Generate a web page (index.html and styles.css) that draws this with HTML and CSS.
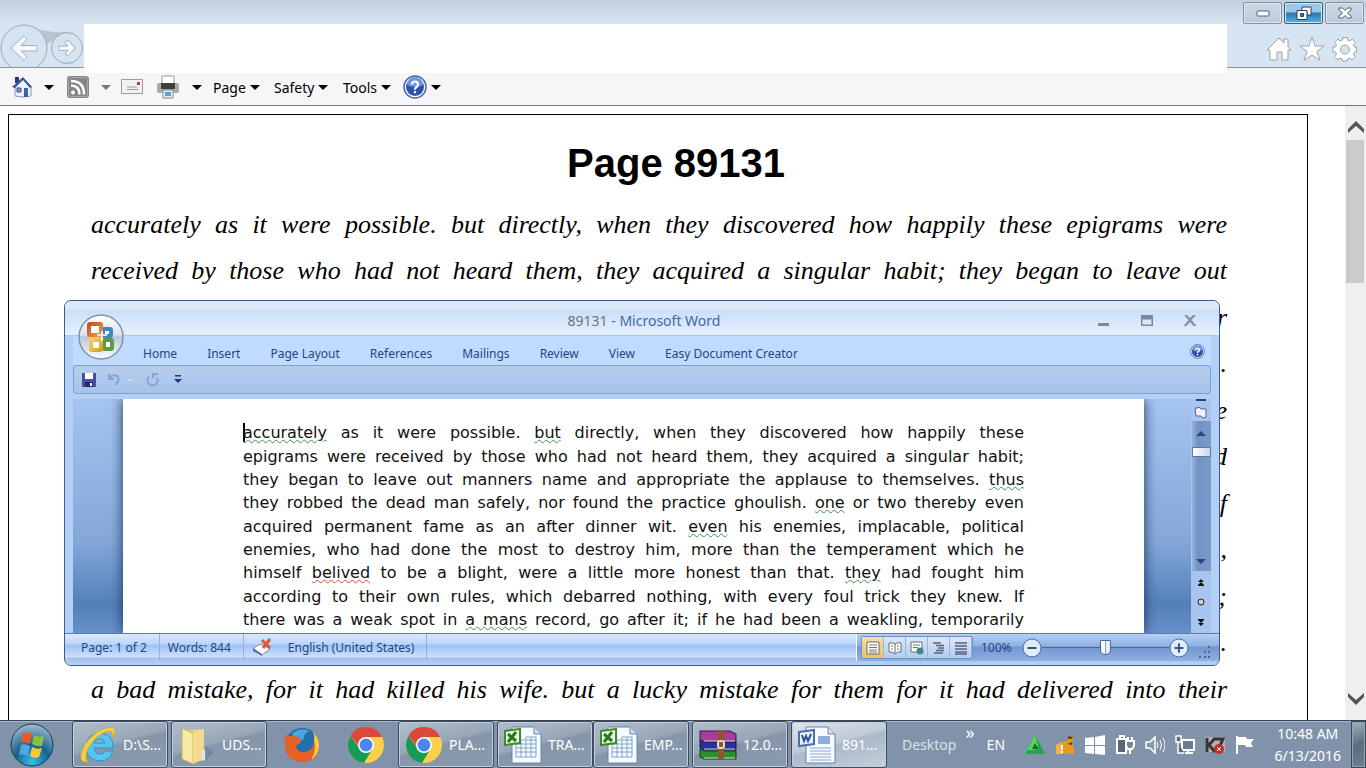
FILE: index.html
```html
<!DOCTYPE html>
<html lang="en">
<head>
  <meta charset="UTF-8">
  <meta name="viewport" content="width=device-width, initial-scale=1.0">
  <title>Page 89131</title>
  <link rel="stylesheet" href="styles.css">
</head>
<body>
  <!-- shared icons -->
  <svg class="symbols" aria-hidden="true">
    <symbol id="caret" viewBox="0 0 10 5"><path d="M0 0h10L5 5z" fill="currentColor"/></symbol>
    <symbol id="chrome" viewBox="0 0 36 36">
      <circle cx="18" cy="18" r="18" fill="#fcd04b"/>
      <path d="M18 18L2.4 9A18 18 0 0 1 34 10H18z" fill="#d94a3d"/>
      <path d="M2.4 9A18 18 0 0 0 16 36l8-13-6-5-8 1z" fill="#179b57"/>
      <path d="M2.4 9A18 18 0 0 1 34 10H18l-8 8z" fill="#d94a3d"/>
      <circle cx="18" cy="18" r="8" fill="#fff"/><circle cx="18" cy="18" r="6.4" fill="#4a86ee"/>
    </symbol>
    <symbol id="excel" viewBox="0 0 38 38">
      <path d="M8 1h22l7 7v29H8z" fill="#f7fbff" stroke="#5f85b5"/><path d="M30 1v7h7" fill="#cfe0f3" stroke="#5f85b5"/>
      <path d="M12 14h20v17H12zM12 18h20M12 22h20M12 26h20M17 14v17M22 11v20M27 11v20M22 11h10v3" fill="none" stroke="#7fa2c8"/>
      <path d="M1 5l15-2v14L1 19z" fill="#e9f6e0" stroke="#3e8c2c" stroke-width="2"/>
      <path d="M4 8l8 7M12 6l-8 10" stroke="#277a20" stroke-width="3"/>
    </symbol>
    <symbol id="help" viewBox="0 0 24 24">
      <circle cx="12" cy="12" r="11" fill="#fff" stroke="#4a68a8" stroke-width="1.5"/>
      <circle cx="12" cy="12" r="9" fill="#2c50b0"/><path d="M4 10a8 8 0 0 1 16 0q-8 4-16 0z" fill="#6f92dc"/>
      <path d="M9 9.500q0-3 3-3t3 3q0 1.500-2 3-1 .8-1 2.200M12 16v2.200" fill="none" stroke="#fff" stroke-width="2.200"/>
    </symbol>
  </svg>

  <header class="browser-head">
    <div class="nav-buttons">
      <svg viewBox="0 0 84 44" width="84" height="44">
        <path d="M32 2q10 7 34 6L50 18l-6 5z" fill="#b9c4d0"/>
        <circle cx="24" cy="24" r="23" fill="#d5e3f1" stroke="#9aa7b5"/>
        <circle cx="67" cy="24" r="15.500" fill="#d5e3f1" stroke="#9aa7b5"/>
        <path d="M11 24L24 12l3 3-6 6.500h16v5.500H21l6 6-3 3.500z" fill="#f5f8fb" stroke="#a4b0bd"/>
        <path d="M75 24l-7-8-3 2.500 3 3.500h-9v4.500h9L65 30l3 2z" fill="#f5f8fb" stroke="#a4b0bd"/>
      </svg>
    </div>
    <div class="address-area"></div>
    <div class="head-right">
      <div class="window-buttons">
        <button aria-label="Minimize"><svg width="14" height="8" viewBox="0 0 14 8"><rect x="1" y="2" width="12" height="5" rx="1" fill="#fff" stroke="#555c66"/></svg></button>
        <button class="active" aria-label="Restore"><svg width="16" height="14" viewBox="0 0 16 14"><path d="M6 1h9v8h-4V5H6z" fill="#fff" stroke="#26425c"/><path d="M1 4.500h10v9H1zM4.500 7.500v3h3v-3z" fill="#fff" fill-rule="evenodd" stroke="#26425c"/></svg></button>
        <button aria-label="Close"><svg width="14" height="12" viewBox="0 0 14 12"><path d="M1 1h3.500L7 3.500 9.500 1H13v2L9.500 6 13 9v2H9.500L7 8.500 4.500 11H1V9l3.500-3L1 3z" fill="#fff" stroke="#555c66"/></svg></button>
      </div>
      <div class="head-icons">
        <svg width="26" height="26" viewBox="0 0 26 26"><path d="M1 14L13 2l5 5V3h4v8l3 3h-3v10h-6v-8h-5v8H4V14z" fill="#fff" stroke="#9ba3ad"/></svg>
        <svg width="26" height="26" viewBox="0 0 26 26"><path d="M13 1l3 9h9l-7 5.500 3 9L13 19l-8 5.500 3-9L1 10h9z" fill="#fff" stroke="#9ba3ad"/></svg>
        <svg width="26" height="26" viewBox="0 0 26 26"><path d="M10.500 4V1.500h5V4l2.500 1 2-2 3.500 3.500-2 2 1 2.500h2v5h-2l-1 2.500 2 2-3.500 3.500-2-2-2.500 1v2h-5v-2L8 22l-2 2-3.500-3.500 2-2-1-2.500H1v-5h2.500l1-2.500-2-2L6 3l2 2z" fill="#fff" stroke="#9ba3ad"/><circle cx="13" cy="13.500" r="4.500" fill="#d7e4f2" stroke="#9ba3ad"/></svg>
      </div>
    </div>
  </header>

  <nav class="command-bar">
    <button aria-label="Home"><svg width="20" height="22" viewBox="0 0 20 22"><path d="M3 1h4v6H3z" fill="#283c78"/><path d="M3 10l8-7 8 7v10l-8 1-8-1z" fill="#eef2fa" stroke="#8a97b8"/><path d="M0 11L11 1l9 10-2 1-7-8-8 8z" fill="#3c5494"/><path d="M12 12h4v9h-4z" fill="#3c62a8"/><path d="M5 12h4v4H5z" fill="#7f9cce" stroke="#3d5488"/></svg><svg class="caret"><use href="#caret"/></svg></button>
    <button class="muted" aria-label="Feeds"><svg width="22" height="22" viewBox="0 0 22 22"><rect width="22" height="22" rx="3" fill="#858585"/><rect x="1.500" y="1.500" width="19" height="19" rx="2" fill="none" stroke="#aaa"/><circle cx="6" cy="16.500" r="2" fill="#fff"/><path d="M4 9.500q8.500 0 8.500 9M4 5q13 0 13 13.500" fill="none" stroke="#fff" stroke-width="2.500"/></svg><svg class="caret"><use href="#caret"/></svg></button>
    <button aria-label="Read mail"><svg width="22" height="16" viewBox="0 0 22 16"><rect x=".5" y=".5" width="21" height="14" fill="#f1f1f1" stroke="#9d9d9d"/><path d="M6 8h10M6 10.500h11" stroke="#999"/><rect x="16" y="3" width="3" height="3" fill="#cf3a38"/></svg></button>
    <button aria-label="Print"><svg width="24" height="24" viewBox="0 0 24 24"><path d="M6 1h12v9H6z" fill="#fff" stroke="#999"/><rect x="1" y="8" width="22" height="10" rx="2" fill="#acacac"/><rect x="5" y="8" width="14" height="6" fill="#3e3e3e"/><path d="M7 15h10v8H7z" fill="#dff1fa" stroke="#888"/><path d="M9 17h6v4H9z" fill="#49aac8"/></svg><svg class="caret"><use href="#caret"/></svg></button>
    <button class="menu">Page<svg class="caret"><use href="#caret"/></svg></button>
    <button class="menu">Safety<svg class="caret"><use href="#caret"/></svg></button>
    <button class="menu">Tools<svg class="caret"><use href="#caret"/></svg></button>
    <button class="menu" aria-label="Help"><svg width="24" height="24"><use href="#help"/></svg><svg class="caret"><use href="#caret"/></svg></button>
  </nav>

  <main class="viewport">
    <article class="scan">
      <h1>Page 89131</h1>
      <div class="script-text">
        <p>accurately as it were possible. but directly, when they discovered how happily these epigrams were</p>
        <p>received by those who had not heard them, they acquired a singular habit; they began to leave out</p>
        <!-- only the line ends show past the Word window -->
        <p class="tail">r</p>
        <p class="tail">.</p>
        <p class="tail">e</p>
        <p class="tail">d</p>
        <p class="tail">f</p>
        <p class="tail">,</p>
        <p class="tail">;</p>
        <p class="tail">.</p>
        <p>a bad mistake, for it had killed his wife. but a lucky mistake for them for it had delivered into their</p>
      </div>
    </article>
    <div class="page-scroll">
      <svg width="16" height="14" viewBox="0 0 16 14"><path d="M0 9l8-8 8 8v4L8 6l-8 7z" fill="#555"/></svg>
      <div class="page-thumb"></div>
      <svg width="16" height="14" viewBox="0 0 16 14"><path d="M0 5l8 8 8-8V1L8 8 0 1z" fill="#555"/></svg>
    </div>

    <section class="word">
      <svg class="office" viewBox="0 0 46 46">
        <defs>
          <linearGradient id="orb" x2="0" y2="1"><stop stop-color="#fff"/><stop offset=".45" stop-color="#dce3ec"/><stop offset=".5" stop-color="#b7c6da"/><stop offset="1" stop-color="#fff"/></linearGradient>
          <linearGradient id="orange" x2="1" y2="1"><stop stop-color="#c9502a"/><stop offset="1" stop-color="#f0954c"/></linearGradient>
          <linearGradient id="yellow" x2="1" y2="1"><stop stop-color="#f3cf5a"/><stop offset="1" stop-color="#dca021"/></linearGradient>
        </defs>
        <circle cx="23" cy="23" r="22" fill="url(#orb)" stroke="#8292ad" stroke-width="1.500"/>
        <g fill="#fff" stroke-width="4"><rect x="25" y="15" width="8" height="7" rx="1" stroke="#3f86c8"/><rect x="26" y="26" width="8" height="9" rx="1" stroke="#5d9a48"/><rect x="13" y="26" width="10" height="10" rx="1" stroke="url(#yellow)"/><rect x="11" y="10" width="12" height="11" rx="1" stroke="url(#orange)"/></g>
        <path d="M19 21h10M24 17v10" stroke="#fff" stroke-width="1.500"/>
      </svg>
      <header class="word-title">
        <h2><span>89131</span> - Microsoft Word</h2>
        <div class="word-controls">
          <button aria-label="Minimize"><svg width="14" height="14" viewBox="0 0 14 14"><path d="M1 10h11v3H1z" fill="#7788a0"/></svg></button>
          <button aria-label="Maximize"><svg width="14" height="14" viewBox="0 0 14 14"><path d="M1 2h12v11H1zM2.500 6.500v5h9v-5z" fill="#7788a0" fill-rule="evenodd"/></svg></button>
          <button aria-label="Close"><svg width="14" height="14" viewBox="0 0 14 14"><path d="M1 2h3l3 3 3-3h3L8.500 7l5 6h-3L7 9l-3.500 4h-3l5-6z" fill="#8291a6"/></svg></button>
        </div>
      </header>
      <div class="word-body">
        <nav class="ribbon">
          <a href="#">Home</a><a href="#">Insert</a><a href="#">Page Layout</a><a href="#">References</a><a href="#">Mailings</a><a href="#">Review</a><a href="#">View</a><a href="#">Easy Document Creator</a>
          <button aria-label="Word help"><svg width="15" height="15"><use href="#help"/></svg></button>
        </nav>
        <div class="quick-access">
          <button aria-label="Save"><svg width="14" height="14" viewBox="0 0 14 14"><path d="M0 0h14v14H0z" fill="#4a4ea2"/><path d="M3 0h8v6H3z" fill="#fff"/><path d="M3 9h8v5H3z" fill="#252b68"/><path d="M8 10h2v3H8z" fill="#fff"/></svg></button>
          <button aria-label="Undo"><svg width="24" height="14" viewBox="0 0 24 14"><path d="M1 1v5h5M1.500 5Q5 1 9 3q4 4-2 9" fill="none" stroke="#8ba3ca" stroke-width="2"/><path d="M20 6l2 2 2-2" fill="none" stroke="#e4eefc"/></svg></button>
          <button aria-label="Redo"><svg width="14" height="14" viewBox="0 0 14 14"><path d="M3 4a5 5 0 1 0 8 1M7 5V1h5" fill="none" stroke="#8ba3ca" stroke-width="2"/></svg></button>
          <button aria-label="Customize"><svg width="8" height="9" viewBox="0 0 8 9"><path d="M1 0h6v1.500H1zM0 4h8L4 8z" fill="#1e3d74"/></svg></button>
        </div>
        <div class="desk">
          <div class="paper">
            <p><i class="cursor"></i><u>accurately</u> as it were possible. <u>but</u> directly, when they discovered how happily these</p>
            <p>epigrams were received by those who had not heard them, they acquired a singular habit;</p>
            <p>they began to leave out manners name and appropriate the applause to themselves. <u>thus</u></p>
            <p>they robbed the dead man safely, nor found the practice ghoulish. <u>one</u> or two thereby even</p>
            <p>acquired permanent fame as an after dinner wit. <u>even</u> his enemies, implacable, political</p>
            <p>enemies, who had done the most to destroy him, more than the temperament which he</p>
            <p>himself <u class="typo">belived</u> to be a blight, were a little more honest than that. <u>they</u> had fought him</p>
            <p>according to their own rules, which debarred nothing, with every foul trick they knew. If</p>
            <p>there was a weak spot in <u>a mans</u> record, go after it; if he had been a weakling, temporarily</p>
          </div>
          <div class="doc-scroll">
            <svg width="14" height="22" viewBox="0 0 14 22"><path d="M2 0h10v2H2z" fill="#2c4275"/><path d="M1 9h3l1-1 2 2h5v8l-3 1-2-2H2z" fill="#f6efff" stroke="#57648a"/></svg>
            <div class="doc-track">
              <svg class="caret up"><use href="#caret"/></svg>
              <div class="doc-thumb"></div>
              <svg class="caret"><use href="#caret"/></svg>
            </div>
            <svg width="8" height="62" viewBox="0 0 8 62"><path d="M1 11l3-3 3 3zM1 14l3-3 3 3zM1 49h6l-3 3zM1 52h6l-3 3zM1 14h6v1H1zM1 48h6v1H1z" fill="#111"/><circle cx="4" cy="31" r="3" fill="#ccc" stroke="#222"/></svg>
          </div>
        </div>
      </div>
      <footer class="status">
        <span class="cell">Page: 1 of 2</span>
        <span class="cell">Words: 844</span>
        <span class="cell">
          <svg width="20" height="18" viewBox="0 0 20 18"><path d="M1 10l8-4 9 5-8 6z" fill="#fff" stroke="#7788a8"/><path d="M1 10v3l9 5v-2z" fill="#5a719f"/><path d="M10 2l8 8M18 1l-7 9" stroke="#e0533c" stroke-width="3"/></svg>
          English (United States)
        </span>
        <div class="status-right">
          <div class="views">
            <button class="on" aria-label="Print layout"><svg width="14" height="14" viewBox="0 0 14 14"><path d="M1 1h12v12H1z" fill="#fff" stroke="#6d6a60"/><path d="M3 4h8M3 6.500h8M3 9h8M3 11h8" stroke="#777"/></svg></button>
            <button aria-label="Full screen reading"><svg width="14" height="14" viewBox="0 0 14 14"><path d="M1 2q3-1 6 1 3-2 6-1v9q-3-1-6 2-3-3-6-2zM7 3v10" fill="#fff" stroke="#5f6c80"/><path d="M3 5h2M3 8h2M9 5h2M9 8h2" stroke="#777"/></svg></button>
            <button aria-label="Web layout"><svg width="14" height="14" viewBox="0 0 14 14"><path d="M1 1h11v10H1z" fill="#fff" stroke="#5f6c80"/><path d="M3 4h7M3 6.500h5" stroke="#777"/><circle cx="10" cy="10" r="3.500" fill="#3f8a80"/></svg></button>
            <button aria-label="Outline"><svg width="14" height="14" viewBox="0 0 14 14"><path d="M1 2h8M4 4.500h8M6 7h6M4 9.500h8M2 12h9" stroke="#556380" stroke-width="1.500"/></svg></button>
            <button aria-label="Draft"><svg width="14" height="14" viewBox="0 0 14 14"><path d="M1 2h12M1 5h12M1 8h12M1 11h12M1 13h12" stroke="#556380" stroke-width="1.500"/></svg></button>
          </div>
          <label for="zoom">100%</label>
          <button aria-label="Zoom out"><svg width="20" height="20" viewBox="0 0 20 20"><circle cx="10" cy="10" r="9" fill="#dfeafa" stroke="#506d9d"/><path d="M5.500 10h9" stroke="#3f5377" stroke-width="2"/></svg></button>
          <input type="range" id="zoom" min="0" max="200" value="100">
          <button aria-label="Zoom in"><svg width="20" height="20" viewBox="0 0 20 20"><circle cx="10" cy="10" r="9" fill="#dfeafa" stroke="#506d9d"/><path d="M5.500 10h9M10 5.500v9" stroke="#3f5377" stroke-width="2"/></svg></button>
          <svg class="grip" width="12" height="12" viewBox="0 0 12 12"><path d="M9 0h2v2H9zM5 5h2v2H5zM9 5h2v2H9zM0 10h2v2H0zM5 10h2v2H5zM9 10h2v2H9z" fill="#46659c"/></svg>
        </div>
      </footer>
    </section>
  </main>

  <footer class="taskbar">
    <button class="start" aria-label="Start"><svg width="44" height="44" viewBox="0 0 44 44">
      <defs><radialGradient id="startGlow" cy="0.9" r="0.9"><stop stop-color="#35c3ea"/><stop offset=".45" stop-color="#13638e"/><stop offset="1" stop-color="#a4b9cf"/></radialGradient></defs>
      <circle cx="22" cy="22" r="21" fill="url(#startGlow)" stroke="#1d3c5c"/>
      <path d="M13 10q5-2 9 1l-2 10q-5-3-9-1z" fill="#e9592b"/><path d="M24 12q5 3 10 1l-2 10q-5 1-10-2z" fill="#8cc043"/><path d="M11 22q4-2 9 1l-2 10q-5-3-9-1z" fill="#57a5e2"/><path d="M22 24q5 3 10 1l-3 9q-5 2-9-1z" fill="#fbc834"/>
    </svg></button>
    <button class="task"><svg width="38" height="38" viewBox="0 0 38 38"><path d="M34 22H15q1 6 6 6 4 0 5-3h8q-3 10-13 10Q7 34 7 21T21 7q14 1 13 15zM15 17h11q-1-4-5.500-4T15 17z" fill="#55c5ee" stroke="#2795c8"/><path d="M9 36Q-1 37 3 25 8 11 22 4q12-5 14 0 1 4-3 8 2-6-2-7-6 0-14 7Q8 21 7 29q-1 5 2 7z" fill="#f5cf42" stroke="#d2a21f" stroke-width=".6"/></svg>D:\S...</button>
    <button class="task"><svg width="38" height="38" viewBox="0 0 38 38"><path d="M10 4l16-1v32l-16-2z" fill="#e9d27e"/><path d="M28 34l8-8-8-6z" fill="#6f7c8c" opacity=".6"/><path d="M4 2l11 5v31L4 33z" fill="#f8e9a4" stroke="#ccb057"/><path d="M15 7l11-4v30l-11 5z" fill="#f2dc8c"/><path d="M24 24h3v10h-3z" fill="#d6e8f6"/></svg>UDS...</button>
    <button class="pinned" aria-label="Firefox"><svg width="36" height="36" viewBox="0 0 36 36"><circle cx="18" cy="18" r="17" fill="#246fae"/><path d="M8 7q8-7 17-3-6 3-5 8l-6 3z" fill="#49a5da"/><path d="M2 7q3 3 6 2l7 1 2 5-5 4q1 6 8 6 8-1 10-8 2-5-1-12 7 7 6 15-2 15-17 15Q2 34 1 19 0 12 2 7z" fill="#e66124"/><path d="M29 5q7 7 6 15-1 8-8 13 6-10 3-20 1-4-1-8z" fill="#fbc840"/></svg></button>
    <button class="pinned" aria-label="Chrome"><svg width="36" height="36"><use href="#chrome"/></svg></button>
    <button class="task"><svg width="36" height="36"><use href="#chrome"/></svg>PLA...</button>
    <button class="task joined"><svg width="38" height="38"><use href="#excel"/></svg>TRA...</button>
    <button class="task"><svg width="38" height="38"><use href="#excel"/></svg>EMP...</button>
    <button class="task"><svg width="38" height="34" viewBox="0 0 38 34"><path d="M1 3h30l6 3v8H5L1 12z" fill="#a53d9c" stroke="#3b1838"/><path d="M1 12l4 2h32v8H5l-4-2z" fill="#2930a3" stroke="#141848"/><path d="M1 21l4 2h32v8H5l-4-2z" fill="#2e8f2d" stroke="#143f13"/><path d="M5 13h31M5 21h31M5 30h31" stroke="#d8d8d8"/><path d="M19 3h6v28h-6z" fill="#8d5630"/><rect x="19" y="13" width="6" height="7" rx="2" fill="none" stroke="#e7d9c0" stroke-width="2"/></svg>12.0...</button>
    <button class="task current"><svg width="38" height="38" viewBox="0 0 38 38"><path d="M8 1h22l7 7v29H8z" fill="#f7fbff" stroke="#5f85b5"/><path d="M30 1v7h7" fill="#cfe0f3" stroke="#5f85b5"/><path d="M12 22h21M12 25h21M12 28h21M12 31h21M12 34h21" stroke="#86a8d2"/><path d="M20 10h12v8H20z" fill="#8baedb"/><path d="M1 6l15-2v14L1 20z" fill="#edf3fc" stroke="#4b6fae" stroke-width="2"/><path d="M4 9l2 6 2-5 2 5 3-7" fill="none" stroke="#2a4f95" stroke-width="2"/></svg>891...</button>
    <span class="desktop-label">Desktop</span>
    <span class="chevrons">»</span>
    <span class="lang">EN</span>
    <div class="tray">
      <svg viewBox="0 0 20 20"><path d="M10 0l10 19H0z" fill="#23a647"/><path d="M10 0l3 10-3 5H0v4z" fill="#56d466"/><path d="M10 8l3 6H7z" fill="#0c6c28"/></svg>
      <svg viewBox="0 0 20 20"><path d="M1 10l6-3 6-1V1l5 1 1 3-3 1v4l3 1v8H1z" fill="#eb981f"/><path d="M1 10l6-3v12H1z" fill="#f6b443"/><path d="M13 1l5 1-1 2h-4zM12 9l5-2v3z" fill="#6a4312"/><path d="M6 10h2v5H6zM6 16h2v2H6z" fill="#fff"/></svg>
      <svg viewBox="0 0 20 20"><path d="M0 3l9-1v8H0zM10 2l10-2v10H10zM0 11h9v8l-9-1zM10 11h10v9l-10-1z" fill="#fff"/></svg>
      <svg viewBox="0 0 20 20"><path d="M2 4h9v14H2zM5 1h4v3H5z" fill="#596675" stroke="#fff" stroke-width="2"/><path d="M11 6h8v5l-2 3h-4l-2-3zM13 2v4M17 2v4M15 14v5" fill="#77869a" stroke="#fff" stroke-width="2"/></svg>
      <svg viewBox="0 0 20 20"><path d="M1 7h4l5-5v16l-5-5H1z" fill="#8999ad" stroke="#fff" stroke-width="1.500"/><path d="M12 7q2 3 0 6M15 5q3 5 0 10M18 3q4 7 0 14" fill="none" stroke="#fff"/></svg>
      <svg viewBox="0 0 20 20"><path d="M7 5h12v10H7zM10 18h8M13 15v3" fill="#687b91" stroke="#fff" stroke-width="2"/><path d="M1 1h5v6H1zM3 7v11h6" fill="#5e6c7c" stroke="#fff" stroke-width="1.500"/></svg>
      <svg viewBox="0 0 20 20"><path d="M0 2h20v15H0z" fill="#b5b1b0"/><path d="M2 3v14M10 3L4 10l6 7M9 4h9l-5 11" fill="none" stroke="#353535" stroke-width="3"/><circle cx="14" cy="14" r="5" fill="#c22a2c"/><path d="M12 12l4 4M16 12l-4 4" stroke="#fff"/></svg>
      <svg viewBox="0 0 20 20"><path d="M2 1v18" stroke="#fff" stroke-width="2"/><path d="M3 2h8l1 2h7l-3 4 2 4h-7l-1-2H3z" fill="#fff"/></svg>
    </div>
    <div class="clock"><span>10:48 AM</span><span>6/13/2016</span></div>
    <button class="peek" aria-label="Show desktop"></button>
  </footer>
</body>
</html>
```
FILE: styles.css
```css
* {
  margin: 0;
  padding: 0;
  box-sizing: border-box;
}

body {
  font-family: "Noto Sans", "Open Sans", sans-serif;
  height: 100vh;
  display: flex;
  flex-direction: column;
  overflow: hidden;
  background: #fff;
  color: #000;
}

button {
  font: inherit;
  color: inherit;
  background: none;
  border: none;
  display: flex;
  align-items: center;
}

svg {
  flex: none;
  display: block;
}

.symbols {
  position: absolute;
  width: 0;
  height: 0;
}

.caret {
  width: 10px;
  height: 5px;
}

/* Browser frame */
.browser-head {
  display: flex;
  height: 68px;
  background: linear-gradient(#c3d0de, #d7e4f1 24px);
  border-bottom: 1px solid #8a96a3;
}

.nav-buttons {
  width: 84px;
  padding-top: 24px;
  overflow: hidden;
}

/* hangs a little over the command bar */
.address-area {
  flex: 1;
  position: relative;
  background: #fff;
  margin: 24px 0 -6px;
}

.head-right {
  width: 139px;
}

.window-buttons {
  display: flex;
  gap: 2px;
  padding: 2px 2px 0 16px;
}

.window-buttons button {
  flex: 1;
  height: 22px;
  justify-content: center;
  border: 1px solid #8492a8;
  border-radius: 2px;
  background: linear-gradient(#cbd7e5, #bccbdc);
  box-shadow: inset 0 0 0 1px #dbe5ef;
}

.window-buttons .active {
  border-color: #2f6086;
  background: linear-gradient(#9cc9e6 45%, #2b78ad 50%, #55b5dc);
}

.head-icons {
  display: flex;
  gap: 7px;
  padding: 12px 8px 0 39px;
}

.command-bar {
  display: grid;
  grid-template-columns: 55px 54px 35px 57px 61px 69px 60px 40px;
  height: 38px;
  padding: 1px 0 0 12px;
  background: #f6f6f6;
  border-bottom: 1px solid #777;
  font-size: 14px;
}

.command-bar button {
  gap: 12px;
}

.command-bar .menu {
  gap: 4px;
}

.command-bar .muted .caret {
  color: #777;
}

/* Scanned page */
.viewport {
  flex: 1;
  min-height: 0;
  display: flex;
  justify-content: space-between;
  position: relative;
}

.scan {
  flex: 1;
  margin: 8px 37px 0 8px;
  padding: 24px 80px 0 82px;
  border: 1px solid #000;
  border-bottom: none;
  overflow: hidden;
}

.scan h1 {
  font: bold 40px/48px "Liberation Sans", Arial, sans-serif;
  text-align: center;
  padding-left: 34px;
}

.script-text {
  font: italic 26px/46px "Liberation Serif", serif;
  padding-top: 15px;
}

.script-text p {
  height: 46px;
  text-align: justify;
  text-align-last: justify;
}

.script-text p:nth-child(even) {
  height: 47px;
}

.script-text .tail {
  text-align-last: right;
}

.page-scroll {
  width: 21px;
  padding: 14px 2px 14px 3px;
  background: #efefef;
  display: flex;
  flex-direction: column;
  gap: 6px;
}

.page-thumb {
  height: 143px;
  margin: 0 0 auto -2px;
  background: #cbcbcb;
}

/* Word window */
.word {
  position: absolute;
  top: 194px;
  left: 64px;
  right: 146px;
  border: 1px solid #3f5b88;
  border-radius: 7px;
  background: #b2cff5;
  overflow: hidden;
  font-size: 12px;
  color: #1f4683;
}

.office {
  position: absolute;
  top: 13px;
  left: 13px;
  width: 46px;
  height: 46px;
}

.word-title {
  display: flex;
  align-items: center;
  height: 35px;
  padding: 4px 22px 0 0;
  background: linear-gradient(#dbe8fa 8px, #cbdff8 9px, #e4f0fe);
  border-bottom: 1px solid #a9c9ee;
}

.word-title h2 {
  flex: 1;
  padding-left: 126px;
  font-size: 14px;
  font-weight: 400;
  text-align: center;
  color: #3f67ab;
}

.word-title h2 span {
  color: #6b7480;
}

.word-controls {
  display: flex;
  gap: 29px;
}

.word-body {
  padding: 0 8px;
}

.ribbon {
  display: flex;
  align-items: center;
  gap: 30px;
  height: 29px;
  padding: 6px 6px 0 70px;
  background: #bfdbff;
}

.ribbon a {
  color: #1f4683;
  text-decoration: none;
  line-height: 16px;
}

.ribbon button {
  margin: -4px 0 0 auto;
}

.quick-access {
  display: flex;
  align-items: center;
  gap: 12px;
  height: 29px;
  padding-left: 8px;
  border: 1px solid #7f9fd0;
  border-radius: 3px;
  background: linear-gradient(#b8cdec, #a6c2ea);
  margin-bottom: 5px;
}

.quick-access button:nth-child(n+2) {
  margin-right: 2px;
}

.desk {
  display: flex;
  height: 234px;
  padding-left: 50px;
  background: linear-gradient(#a5c4ee, #85a8da 60%, #5380b8 88%, #688fcb);
}

.paper {
  flex: 1;
  min-width: 0;
  overflow: hidden;
  padding: 22px 120px 0;
  background: #fff;
  box-shadow: 0 0 12px #1b355e;
  clip-path: inset(0 -12px);
  color: #111;
  font: 16px/23px "DejaVu Sans", Verdana, sans-serif;
}

.paper p {
  height: 23px;
  text-align-last: justify;
  white-space: nowrap;
}

.paper p:nth-child(3n+1) {
  height: 24px;
}

.paper u {
  text-decoration: underline wavy #3f9352 1px;
  text-underline-offset: 1px;
}

.paper .typo {
  text-decoration-color: #d44a3b;
}

.cursor {
  display: inline-block;
  height: 19px;
  border-left: 2px solid #000;
  margin-right: -2px;
  vertical-align: -4px;
}

.doc-scroll {
  width: 20px;
  margin-left: 47px;
  display: flex;
  flex-direction: column;
  align-items: center;
  background: #a8c5f0;
}

.doc-track {
  flex: 1;
  width: 19px;
  padding: 10px 0 7px;
  display: flex;
  flex-direction: column;
  align-items: center;
  color: #2b477c;
  background: linear-gradient(90deg, #98b3dc, #7192c3 30%, #7c9bcb);
}

.doc-track .up {
  transform: rotate(180deg);
}

.doc-thumb {
  width: 19px;
  height: 10px;
  margin: 11px 0 auto;
  border: 1px solid #5e789e;
  background: linear-gradient(90deg, #fff, #c9d6e8);
}

.status {
  display: flex;
  height: 32px;
  border-top: 1px solid #567db1;
  background: linear-gradient(#dce9fc, #bcd5fa 10px, #9ec2f3 11px, #cbe0fc 23px, #a4c1ec 24px, #b7d1f5);
}

.cell {
  display: flex;
  align-items: center;
  gap: 16px;
  height: 26px;
  padding: 0 12px 0 16px;
  border-right: 1px solid #8fb1de;
}

.cell + .cell {
  padding-left: 8px;
}

.status-right {
  display: flex;
  align-items: center;
  height: 27px;
  margin-left: auto;
  padding: 0 8px 0 4px;
  border-left: 1px solid #fff;
  background: linear-gradient(#b6cff3, #8eb1e3 12px, #7197cd 13px, #8fb1e2);
}

.views {
  display: flex;
  margin-right: 8px;
  border: 1px solid #6d90c6;
  border-radius: 2px;
}

.views button {
  width: 22px;
  height: 21px;
  justify-content: center;
  background: linear-gradient(#dbe8fa, #b4ccee);
  border-right: 1px solid #9ab6df;
}

.views .on {
  background: linear-gradient(#f5dfa9, #f0bd62);
}

.status-right label {
  width: 41px;
}

.status-right input {
  appearance: none;
  width: 127px;
  height: 16px;
  background: linear-gradient(#466ba3, #466ba3) center / 100% 1px no-repeat;
}

.status-right input::-webkit-slider-thumb {
  appearance: none;
  width: 11px;
  height: 15px;
  border: 1px solid #4c6898;
  border-radius: 1px 1px 5px 5px;
  background: linear-gradient(90deg, #fff 4px, #8ca0c0 4px, #8ca0c0 5px, #e2ecfa 5px);
}

.grip {
  margin: 8px 0 0 10px;
}

/* Taskbar */
.taskbar {
  display: flex;
  align-items: center;
  height: 48px;
  background: #8193aa;
  border-top: 1px solid #354456;
  box-shadow: inset 0 1px #a8b5c6;
  color: #fff;
  font-size: 14px;
}

.start {
  width: 72px;
  padding-left: 10px;
}

.task {
  width: 96px;
  height: 47px;
  margin-right: 3px;
  padding: 0 6px;
  gap: 6px;
  white-space: nowrap;
  border: 1px solid #3e4c5e;
  border-radius: 3px;
  box-shadow: inset 0 0 0 1px #c4ced9;
  background: linear-gradient(165deg, #b1bdca, #98a7b8 45%, #8696aa 50%, #8a9bb0);
}

.task svg {
  width: 38px;
}

.joined {
  margin-right: 0;
}

.current {
  background: linear-gradient(165deg, #dfe5ec, #bfcad6 45%, #aab8c8 50%, #c5cfdb);
}

.pinned {
  width: 64px;
  justify-content: center;
}

.desktop-label {
  margin-left: 12px;
  color: #dbe1e8;
}

.chevrons {
  margin: -26px 12px 0 9px;
  font-size: 18px;
}

.lang {
  margin-right: 20px;
}

.tray {
  display: flex;
  gap: 10px;
}

.tray svg {
  width: 20px;
  height: 20px;
}

.clock {
  margin-left: auto;
  margin-right: 10px;
  display: flex;
  flex-direction: column;
  align-items: center;
  line-height: 22px;
}

.peek {
  width: 15px;
  height: 47px;
  border: 1px solid #3b4858;
  box-shadow: inset 0 0 0 1px #93a2b4;
  background: linear-gradient(160deg, #a6b1bf, #5c6b7e 50%, #6f7f93);
}
```
